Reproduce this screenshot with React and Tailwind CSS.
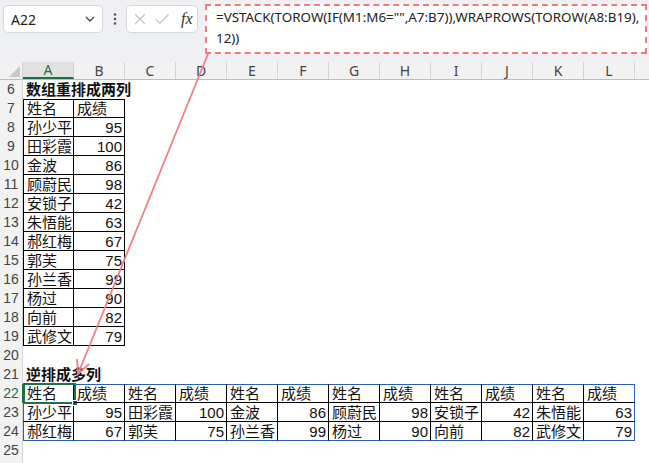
import React from "react";

const COLS = ["A", "B", "C", "D", "E", "F", "G", "H", "I", "J", "K", "L"];

const t1 = [
  ["孙少平", "95"],
  ["田彩霞", "100"],
  ["金波", "86"],
  ["顾蔚民", "98"],
  ["安锁子", "42"],
  ["朱悟能", "63"],
  ["郝红梅", "67"],
  ["郭芙", "75"],
  ["孙兰香", "99"],
  ["杨过", "90"],
  ["向前", "82"],
  ["武修文", "79"],
];

const r23 = ["孙少平", "95", "田彩霞", "100", "金波", "86", "顾蔚民", "98", "安锁子", "42", "朱悟能", "63"];
const r24 = ["郝红梅", "67", "郭芙", "75", "孙兰香", "99", "杨过", "90", "向前", "82", "武修文", "79"];
const r22 = ["姓名", "成绩", "姓名", "成绩", "姓名", "成绩", "姓名", "成绩", "姓名", "成绩", "姓名", "成绩"];

function RowHead({ n, active }) {
  return (
    <div
      className={
        "w-[23px] shrink-0 h-full flex items-center justify-center text-[14px] bg-[#f2f2f2] border-r " +
        (active ? "text-[#1e7145] border-r-[#1e7145] bg-[#e3e3e3]" : "text-[#444] border-r-[#d4d4d4]")
      }
    >
      {n}
    </div>
  );
}

function Cell({ children, right, cls = "", bold }) {
  return (
    <div
      className={
        "w-[51px] shrink-0 h-full flex items-center whitespace-nowrap text-[15px] leading-none text-[#111] " +
        (right ? "justify-end pr-[2px] " : "justify-start pl-[3px] ") +
        (bold ? "font-bold " : "") +
        cls
      }
    >
      {children}
    </div>
  );
}

function Row({ n, active, children }) {
  return (
    <div className="flex h-[19px]">
      <RowHead n={n} active={active} />
      {children}
    </div>
  );
}

function Empty({ count }) {
  return Array.from({ length: count }).map((_, i) => <Cell key={i} />);
}

export default function App() {
  return (
    <div className="relative w-[649px] h-[463px] overflow-hidden bg-white font-['Liberation_Sans','Noto_Sans_CJK_SC',sans-serif]">
      {/* toolbar */}
      <div className="h-[62px] bg-[#eef0f3] flex items-start pl-[3px] pt-[5px]">
        <div className="w-[100px] h-[28px] bg-white border border-[#d6d8dc] rounded-[5px] flex items-center justify-between pl-[7px] pr-[6px]">
          <span className="text-[14px] text-[#222] font-['Noto_Sans',sans-serif]">A22</span>
          <svg width="12" height="8" viewBox="0 0 12 8">
            <path d="M2 2 L6 6 L10 2" fill="none" stroke="#444" strokeWidth="1.3" />
          </svg>
        </div>
        <div className="w-[23px] h-[28px] flex items-center justify-center">
          <svg width="4" height="14" viewBox="0 0 4 14">
            <circle cx="2" cy="2.5" r="1.3" fill="#555" />
            <circle cx="2" cy="7" r="1.3" fill="#555" />
            <circle cx="2" cy="11.5" r="1.3" fill="#555" />
          </svg>
        </div>
        <div className="w-[72px] h-[28px] bg-white border border-[#d6d8dc] rounded-[5px] flex items-center pl-[6px] gap-[7px]">
          <svg width="14" height="14" viewBox="0 0 14 14">
            <path d="M2 2 L12 12 M12 2 L2 12" stroke="#c4c4c4" strokeWidth="1.2" />
          </svg>
          <svg width="16" height="14" viewBox="0 0 16 14">
            <path d="M1.5 7 L6 11.5 L14.5 2.5" fill="none" stroke="#c4c4c4" strokeWidth="1.2" />
          </svg>
          <span className="ml-[4px] text-[16px] italic text-[#333] font-['Liberation_Serif',serif] leading-none">fx</span>
        </div>
        <div className="ml-[7px] -mt-[1px] w-[442px] h-[50px] bg-white border-2 border-dashed border-[#f07a7a] pl-[9px] pt-[1px] text-[13.4px] leading-[21px] text-[#222] font-['Noto_Sans',sans-serif] whitespace-nowrap overflow-hidden">
          <div>=VSTACK(TOROW(IF(M1:M6="",A7:B7)),WRAPROWS(TOROW(A8:B19),</div>
          <div>12))</div>
        </div>
      </div>

      {/* column headers */}
      <div className="flex h-[18px] bg-[#f2f2f2] border-b border-[#bdbdbd]">
        <div className="w-[23px] shrink-0 h-full relative border-r border-[#d4d4d4]">
          <svg className="absolute right-[2px] bottom-[2px]" width="11" height="11" viewBox="0 0 11 11">
            <path d="M11 0 L11 11 L0 11 Z" fill="#c8c8c8" />
          </svg>
        </div>
        {COLS.map((c) => (
          <div
            key={c}
            className={
              "w-[51px] shrink-0 h-full flex items-center justify-center text-[14px] border-r border-[#d4d4d4] font-['Noto_Sans',sans-serif] " +
              (c === "A" ? "bg-[#e1e1e1] text-[#1e7145] border-b-2 border-b-[#1e7145]" : "text-[#444]")
            }
          >
            {c}
          </div>
        ))}
        <div className="flex-1" />
      </div>

      {/* rows */}
      <Row n={6}>
        <Cell bold>数组重排成两列</Cell>
        <Empty count={11} />
      </Row>
      <Row n={7}>
        <Cell cls="border border-black">姓名</Cell>
        <Cell cls="border-t border-r border-b border-black">成绩</Cell>
        <Empty count={10} />
      </Row>
      {t1.map(([name, score], i) => (
        <Row key={i} n={8 + i}>
          <Cell cls="border-l border-r border-b border-black">{name}</Cell>
          <Cell right cls="border-r border-b border-black">{score}</Cell>
          <Empty count={10} />
        </Row>
      ))}
      <Row n={20}>
        <Empty count={12} />
      </Row>
      <Row n={21}>
        <Cell bold>逆排成多列</Cell>
        <Empty count={11} />
      </Row>
      <Row n={22} active>
        {r22.map((v, i) => (
          <Cell
            key={i}
            cls={
              "relative border-t border-t-[#2f5fb3] border-b border-b-black " +
              (i === 0 ? "border-l border-l-[#2f5fb3] " : "") +
              (i === 11 ? "border-r border-r-[#2f5fb3]" : "border-r border-r-black")
            }
          >
            {v}
            {i === 0 && (
              <div className="absolute left-[-1px] top-[-2px] w-[53px] h-[21px] border-2 border-[#1e7145]">
                <div className="absolute right-[-4px] bottom-[-4px] w-[6px] h-[6px] bg-[#1e7145] border border-white" />
              </div>
            )}
          </Cell>
        ))}
      </Row>
      <Row n={23}>
        {r23.map((v, i) => (
          <Cell
            key={i}
            right={i % 2 === 1}
            cls={
              "border-b border-b-black " +
              (i === 0 ? "border-l border-l-[#2f5fb3] " : "") +
              (i === 11 ? "border-r border-r-[#2f5fb3]" : "border-r border-r-black")
            }
          >
            {v}
          </Cell>
        ))}
      </Row>
      <Row n={24}>
        {r24.map((v, i) => (
          <Cell
            key={i}
            right={i % 2 === 1}
            cls={
              "border-b border-b-[#2f5fb3] " +
              (i === 0 ? "border-l border-l-[#2f5fb3] " : "") +
              (i === 11 ? "border-r border-r-[#2f5fb3]" : "border-r border-r-black")
            }
          >
            {v}
          </Cell>
        ))}
      </Row>
      <Row n={25}>
        <Empty count={12} />
      </Row>
      <Row n="">
        <Empty count={12} />
      </Row>

      {/* arrow overlay */}
      <svg className="absolute left-0 top-0 pointer-events-none" width="649" height="463" viewBox="0 0 649 463">
        <path d="M208 54 L78 374" stroke="#f07f7f" strokeWidth="1.8" fill="none" />
        <path d="M77 359 L78 374 L89 364" stroke="#f07f7f" strokeWidth="1.8" fill="none" />
      </svg>
    </div>
  );
}
